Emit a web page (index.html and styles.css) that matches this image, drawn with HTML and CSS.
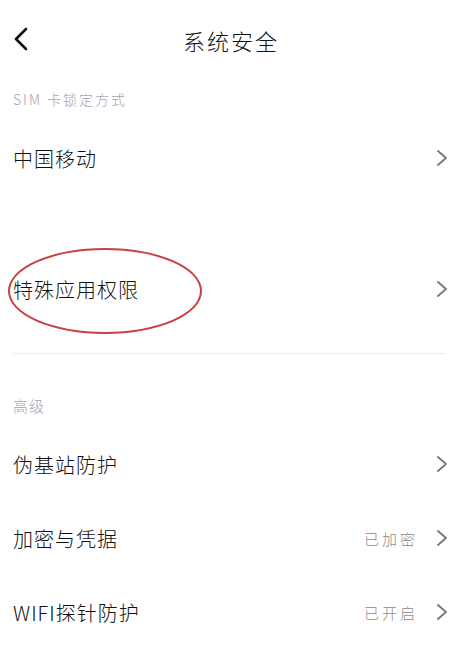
FILE: index.html
```html
<!DOCTYPE html>
<html lang="zh-CN">
<head>
<meta charset="UTF-8" />
<meta name="viewport" content="width=device-width, initial-scale=1" />
<title>系统安全</title>
<link rel="stylesheet" href="styles.css">
</head>
<body>

<div class="page">
  <div class="header">
    <span class="back">
      <svg width="16" height="24" viewBox="0 0 16 24"><path d="M13 2 L3 12 L13 22" fill="none" stroke="#111" stroke-width="2.6" stroke-linecap="round" stroke-linejoin="round"/></svg>
    </span>
    <div class="title">系统安全</div>
  </div>

  <div class="label first">SIM 卡锁定方式</div>
  <div class="row">
    <span class="name">中国移动</span>
    <span class="chev"><svg width="12" height="18" viewBox="0 0 12 18"><path d="M2 2 L10 9 L2 16" fill="none" stroke="#777" stroke-width="1.8" stroke-linecap="round" stroke-linejoin="round"/></svg></span>
  </div>

  <div class="spacer"></div>

  <div class="row marked">
    <span class="name">特殊应用权限</span>
    <span class="chev"><svg width="12" height="18" viewBox="0 0 12 18"><path d="M2 2 L10 9 L2 16" fill="none" stroke="#777" stroke-width="1.8" stroke-linecap="round" stroke-linejoin="round"/></svg></span>
    <div class="circle"></div>
  </div>

  <div class="divider"></div>

  <div class="label second">高级</div>
  <div class="row">
    <span class="name">伪基站防护</span>
    <span class="chev"><svg width="12" height="18" viewBox="0 0 12 18"><path d="M2 2 L10 9 L2 16" fill="none" stroke="#777" stroke-width="1.8" stroke-linecap="round" stroke-linejoin="round"/></svg></span>
  </div>
  <div class="row">
    <span class="name">加密与凭据</span>
    <span class="value">已加密</span>
    <span class="chev"><svg width="12" height="18" viewBox="0 0 12 18"><path d="M2 2 L10 9 L2 16" fill="none" stroke="#777" stroke-width="1.8" stroke-linecap="round" stroke-linejoin="round"/></svg></span>
  </div>
  <div class="row">
    <span class="name">WIFI探针防护</span>
    <span class="value">已开启</span>
    <span class="chev"><svg width="12" height="18" viewBox="0 0 12 18"><path d="M2 2 L10 9 L2 16" fill="none" stroke="#777" stroke-width="1.8" stroke-linecap="round" stroke-linejoin="round"/></svg></span>
  </div>
</div>

</body>
</html>
```

FILE: styles.css
```css
body {
  margin: 0;
  background: #fff;
  font-family: "Noto Sans CJK SC", "Noto Sans", sans-serif;
  color: #111;
}
.page {
  width: 474px;
}
.header {
  height: 80px;
  display: flex;
  align-items: center;
  justify-content: center;
  position: relative;
}
.back {
  position: absolute;
  left: 13px;
  top: 27px;
  display: flex;
}
.title {
  font-size: 22px;
  line-height: 30px;
  letter-spacing: 2px;
  font-weight: 300;
  padding-right: 12px;
}
.label {
  padding-left: 13px;
  color: #a4a4ac;
  font-size: 14px;
  line-height: 20px;
  font-weight: 300;
}
.label.first {
  padding-top: 9px;
  padding-bottom: 12px;
  letter-spacing: 2px;
}
.label.second {
  padding-top: 42px;
  padding-bottom: 11px;
  font-size: 15px;
  letter-spacing: 1px;
}
.row {
  height: 74px;
  display: flex;
  align-items: center;
  padding: 0 26px 0 13px;
  position: relative;
}
.name {
  flex: 1;
  font-size: 20px;
  letter-spacing: 1px;
  font-weight: 300;
}
.value {
  color: #8a8a8a;
  font-size: 15px;
  letter-spacing: 3px;
  margin-right: 18px;
  font-weight: 300;
}
.chev {
  display: flex;
}
.spacer {
  height: 57px;
}
.circle {
  position: absolute;
  left: 8px;
  top: -4px;
  width: 190px;
  height: 82px;
  border: 2px solid #c8403f;
  border-radius: 50%;
}
.divider {
  height: 1px;
  margin: 27px 28px 0 13px;
  background: #ececec;
}
```
